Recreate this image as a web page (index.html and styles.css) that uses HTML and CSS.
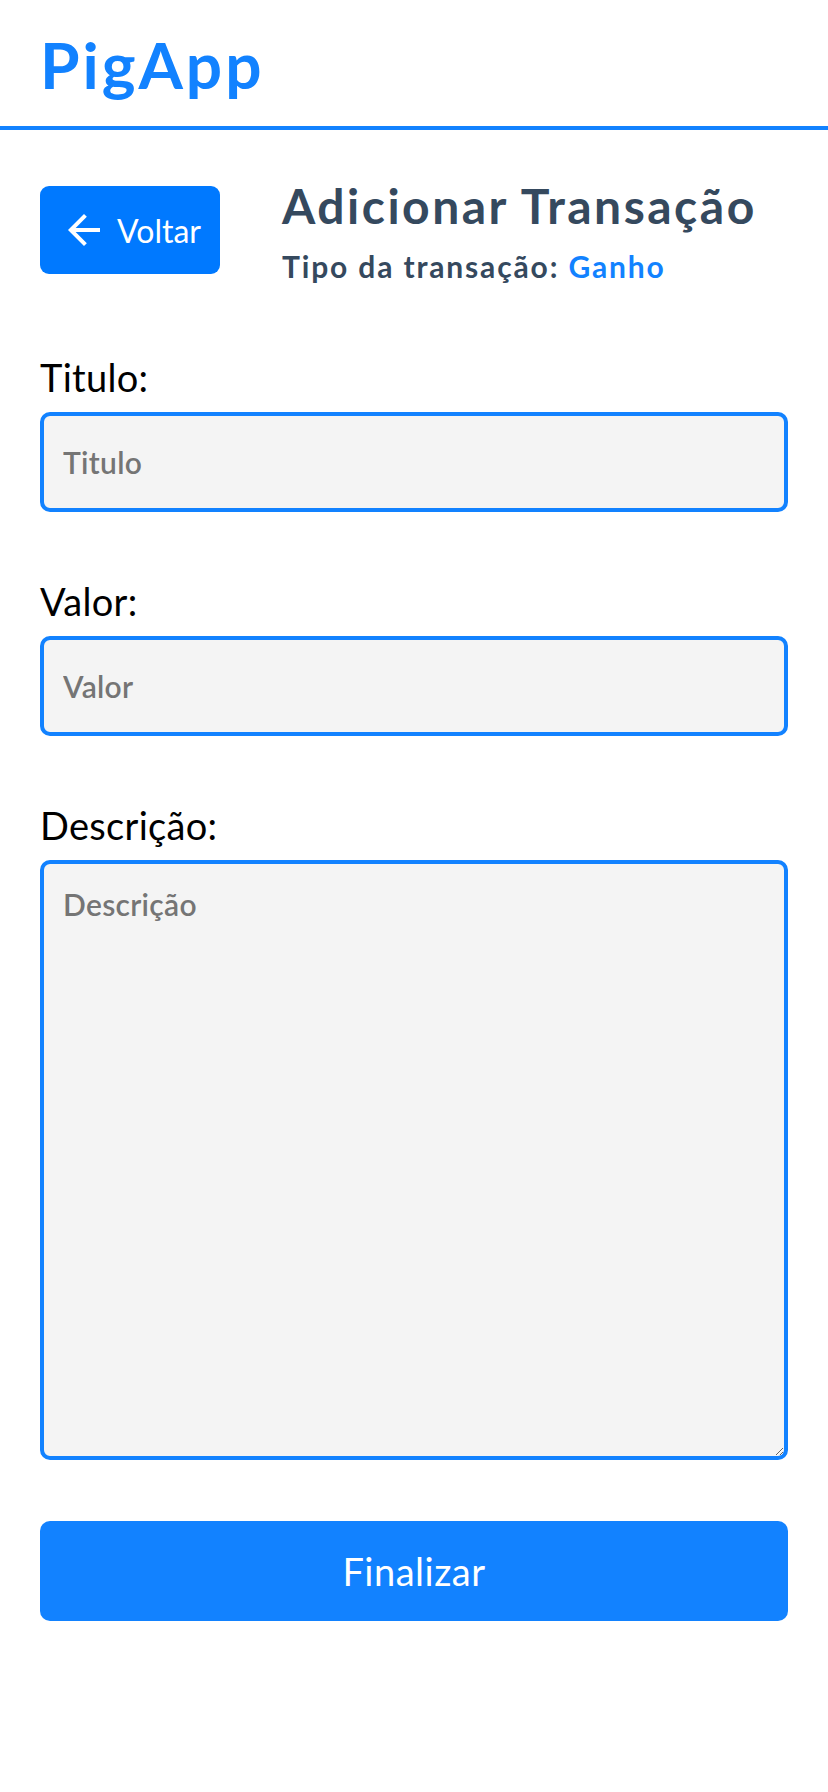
FILE: index.html
```html
<!DOCTYPE html>
<html lang="pt-BR">
<head>
<meta charset="utf-8">
<title>PigApp - Adicionar Transação</title>
<link rel="stylesheet" href="styles.css">
</head>
<body>
<header class="topbar">
  <h1 class="brand">PigApp</h1>
</header>
<main class="page">
  <section class="intro">
    <button class="back-btn" type="button">
      <svg class="back-icon" viewBox="0 0 24 24" aria-hidden="true"><path d="M20 11H7.83l5.59-5.59L12 4l-8 8 8 8 1.41-1.41L7.83 13H20v-2z"/></svg>
      <span>Voltar</span>
    </button>
    <div class="intro-text">
      <h2 class="title">Adicionar Transação</h2>
      <p class="subtitle">Tipo da transação: <span class="type">Ganho</span></p>
    </div>
  </section>
  <form class="form">
    <div class="field">
      <label class="label" for="titulo">Titulo:</label>
      <input class="input" id="titulo" type="text" placeholder="Titulo">
    </div>
    <div class="field">
      <label class="label" for="valor">Valor:</label>
      <input class="input" id="valor" type="text" placeholder="Valor">
    </div>
    <div class="field">
      <label class="label" for="descricao">Descrição:</label>
      <textarea class="input textarea" id="descricao" placeholder="Descrição"></textarea>
    </div>
    <button class="submit" type="button">Finalizar</button>
  </form>
</main>
</body>
</html>
```
FILE: styles.css
```css
* { box-sizing: border-box; }
body {
  margin: 0;
  background: #ffffff;
  font-family: Lato, "Open Sans", sans-serif;
  color: #000;
}
.topbar {
  height: 130px;
  padding: 0 40px;
  border-bottom: 4px solid #1282ff;
}
.brand {
  margin: 0;
  padding-top: 33px;
  font-size: 64px;
  line-height: 64px;
  font-weight: 700;
  letter-spacing: 3px;
  color: #1282ff;
}
.page {
  padding: 0 40px;
}
.intro {
  display: flex;
  align-items: flex-start;
  gap: 62px;
  margin-top: 56px;
}
.back-btn {
  display: flex;
  align-items: center;
  gap: 9px;
  height: 88px;
  padding: 0 19px 0 20px;
  border: none;
  border-radius: 9px;
  background: #0079ff;
  color: #fff;
  font-family: inherit;
  font-size: 32px;
}
.back-icon {
  width: 48px;
  height: 48px;
  fill: #fff;
}
.title {
  margin: 0;
  font-size: 48px;
  line-height: 40px;
  font-weight: 700;
  letter-spacing: 2.5px;
  color: #35495e;
}
.subtitle {
  margin: 20px 0 0;
  font-size: 30px;
  line-height: 40px;
  font-weight: 700;
  letter-spacing: 1.85px;
  color: #35495e;
}
.type { color: #1282ff; }
.form {
  margin-top: 68px;
  display: flex;
  flex-direction: column;
}
.field {
  display: flex;
  flex-direction: column;
  margin-bottom: 66px;
}
.label {
  font-size: 38px;
  line-height: 46px;
  margin-bottom: 12px;
  letter-spacing: 0.3px;
}
.input {
  height: 100px;
  width: 100%;
  padding: 0 19px;
  border: 4px solid #1282ff;
  border-radius: 10px;
  background: #f4f4f4;
  font-family: inherit;
  font-size: 30px;
  font-weight: 600;
  letter-spacing: 0.3px;
  color: #333;
  outline: none;
}
.input::placeholder { color: #757575; }
.textarea {
  height: 600px;
  padding: 22px 19px;
  line-height: 36px;
  resize: vertical;
}
.field:last-of-type { margin-bottom: 61px; }
.submit {
  height: 100px;
  border: none;
  border-radius: 10px;
  background: #1282ff;
  color: #fff;
  font-family: inherit;
  font-size: 38px;
  letter-spacing: 0.5px;
}
```
